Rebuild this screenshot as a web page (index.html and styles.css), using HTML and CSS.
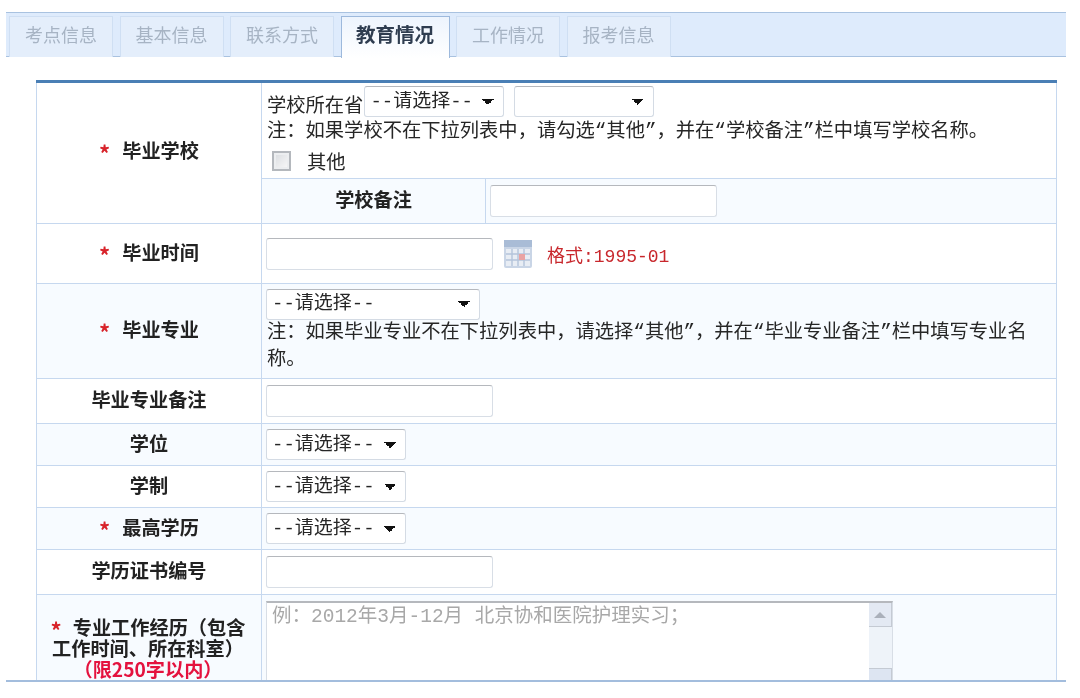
FILE: index.html
```html
<!DOCTYPE html>
<html lang="zh-CN">
<head>
<meta charset="utf-8">
<title>教育情况</title>
<link rel="stylesheet" href="styles.css">
</head>
<body>
<div class="page">
  <nav class="tabs">
    <a class="tab">考点信息</a>
    <a class="tab">基本信息</a>
    <a class="tab">联系方式</a>
    <a class="tab active">教育情况</a>
    <a class="tab">工作情况</a>
    <a class="tab">报考信息</a>
  </nav>
  <div class="panel">
    <table class="form">
      <colgroup><col class="c1"><col class="c2"><col class="c3"></colgroup>
      <tr class="r1">
        <th rowspan="2" class="first"><span class="star">*</span>毕业学校</th>
        <td colspan="2" class="school">
          <div class="line"><span class="prov">学校所在省</span><select class="sel s140"><option>--请选择--</option></select><select class="sel s140 next"><option></option></select></div>
          <div class="note">注&#xFF1A;如果学校不在下拉列表中&#xFF0C;请勾选“其他”&#xFF0C;并在“学校备注”栏中填写学校名称。</div>
          <label class="check"><span class="box"></span>其他</label>
        </td>
      </tr>
      <tr class="r2 tint">
        <th class="plain">学校备注</th>
        <td><input class="text" type="text"></td>
      </tr>
      <tr class="r3">
        <th><span class="star">*</span>毕业时间</th>
        <td colspan="2">
          <div class="line date"><input class="text" type="text">
            <svg class="cal" width="30" height="30" viewBox="0 0 30 30"><rect x="1" y="1" width="28" height="28" rx="2" fill="#c9d5e6"/><rect x="1" y="1" width="28" height="7" fill="#a9bcd6"/><rect x="3" y="10" width="24" height="17" fill="#e8edf4"/><path d="M3 15h24M3 21h24M9 10v17M15 10v17M21 10v17" stroke="#b4c4da" stroke-width="1.4"/><rect x="16" y="15" width="6" height="6" fill="#e9a3a3"/></svg>
            <span class="fmt">格式:1995-01</span></div>
        </td>
      </tr>
      <tr class="r4 tint">
        <th><span class="star">*</span>毕业专业</th>
        <td colspan="2" class="major">
          <select class="sel s214"><option>--请选择--</option></select>
          <div class="note">注&#xFF1A;如果毕业专业不在下拉列表中&#xFF0C;请选择“其他”&#xFF0C;并在“毕业专业备注”栏中填写专业名称。</div>
        </td>
      </tr>
      <tr class="r5">
        <th class="plain">毕业专业备注</th>
        <td colspan="2"><input class="text" type="text"></td>
      </tr>
      <tr class="r6 tint">
        <th class="plain">学位</th>
        <td colspan="2"><select class="sel s140"><option>--请选择--</option></select></td>
      </tr>
      <tr class="r6">
        <th class="plain">学制</th>
        <td colspan="2"><select class="sel s140"><option>--请选择--</option></select></td>
      </tr>
      <tr class="r6 tint">
        <th><span class="star">*</span>最高学历</th>
        <td colspan="2"><select class="sel s140"><option>--请选择--</option></select></td>
      </tr>
      <tr class="r5">
        <th class="plain">学历证书编号</th>
        <td colspan="2"><input class="text" type="text"></td>
      </tr>
      <tr class="r10 tint">
        <th class="long"><span class="star small">*</span>专业工作经历&#xFF08;包含<br>工作时间、所在科室&#xFF09;<br><span class="limit">&#xFF08;限250字以内&#xFF09;</span></th>
        <td colspan="2">
          <div class="areabox">
            <textarea class="area">例&#xFF1A;2012年3月-12月 北京协和医院护理实习&#xFF1B;</textarea>
            <div class="bar"><span class="btn up"></span><span class="btn down"></span></div>
          </div>
        </td>
      </tr>
    </table>
  </div>
</div>
</body>
</html>
```
FILE: styles.css
```css
* { box-sizing: border-box; }
html, body { margin: 0; padding: 0; background: #fff; }
body { height: 698px; overflow: hidden; }
.page {
  padding: 12px 14px 0 6px;
  font-family: "Liberation Mono", "Noto Sans CJK SC", monospace;
  font-size: 19.3px;
  color: #262626;
  filter: blur(0.45px);
}
.tabs {
  display: flex;
  gap: 6.5px;
  height: 45px;
  padding: 3px 0 0 3px;
  background: #deebfc;
  border-top: 1px solid #a9c2e0;
  border-bottom: 1px solid #a9c2e0;
}
.tab {
  width: 104px;
  height: 41px;
  text-align: center;
  line-height: 34px;
  font-size: 18px;
  font-family: "Noto Sans CJK SC", sans-serif;
  color: #a7b4c4;
  background: #e4eefb;
  border: 1px solid #cfdff3;
  border-bottom: 0;
}
.tab.active {
  width: 109px;
  height: 42px;
  font-size: 19.5px;
  color: #2f3d50;
  font-weight: 700;
  background: linear-gradient(#edf4fd, #fff);
  border-color: #9db9dc;
}
.panel {
  height: 625px;
  padding: 23px 9px 0 30px;
  overflow: hidden;
  border-bottom: 2px solid #a3bddd;
}
.form {
  width: 1021px;
  table-layout: fixed;
  border-collapse: collapse;
  border-top: 3px solid #4a7fb5;
}
.c1 { width: 225px; }
.c2 { width: 224px; }
.form th, .form td {
  border: 1px solid #c6d8ef;
  padding: 0 4px;
}
.form tr:first-child th, .form tr:first-child td { border-top: 0; }
.form th {
  font-family: "Noto Sans CJK SC", sans-serif;
  font-size: 19.2px;
  font-weight: 700;
  color: #222;
  text-align: center;
  padding-bottom: 4px;
}
.form th.first { padding-bottom: 6px; }
.tint th, .tint td { background: #f7fbff; }
.r1 td { height: 97px; }
.r2 th, .r2 td { height: 45px; }
.r3 th, .r3 td { height: 60px; }
.r4 th, .r4 td { height: 95px; }
.r5 th, .r5 td { height: 45px; }
.r6 th, .r6 td { height: 42px; }
.r10 th, .r10 td { height: 125px; vertical-align: top; }
.star {
  color: #d8232a;
  margin-right: 12px;
  font-size: 22px;
  line-height: 0;
  font-weight: 700;
  vertical-align: -4px;
}
.star.small { margin-right: 11px; }
.school { padding-top: 2px !important; vertical-align: top; }
.line { display: flex; align-items: center; }
.prov { margin: 5px 1px 0 1px; }
.note { line-height: 27px; padding-left: 1px; padding-right: 24px; }
.school .note { margin-top: 1px; }
.next { margin-left: 10px; }
.sel {
  appearance: none;
  -webkit-appearance: none;
  height: 31px;
  padding: 0 0 0 5px;
  font: inherit;
  font-size: 19px;
  color: #262626;
  border: 1px solid #d4dbe4;
  border-top-color: #b5b8bd;
  border-radius: 3px;
  background-color: #fff;
  background-image: linear-gradient(45deg, transparent 50%, #111 50%), linear-gradient(135deg, #111 50%, transparent 50%);
  background-size: 6px 6px, 6px 6px;
  background-position: right 15px center, right 9px center;
  background-repeat: no-repeat;
}
.s140 { width: 140px; }
.s214 { width: 214px; display: block; }
.text {
  width: 227px;
  height: 32px;
  display: block;
  background: #fff;
  border: 1px solid #d8dee6;
  border-top-color: #b5b8bd;
  border-radius: 3px;
}
.check { display: flex; align-items: center; height: 30px; padding-left: 6px; }
.box {
  width: 19px;
  height: 20px;
  margin-right: 16px;
  border: 2px solid #b4b8bd;
  background: linear-gradient(135deg, #d8dbdf, #fafafa);
  box-shadow: inset 0 0 0 2px #eceef0;
}
.cal { margin-left: 10px; }
.fmt { margin-left: 14px; color: #c8272c; font-size: 18px; }
.limit { color: #e4123e; }
.form .long { line-height: 21px; padding: 22px 4px 0 2px; }
.areabox {
  display: flex;
  width: 627px;
  height: 92px;
  margin-top: 6px;
  border: 1px solid #d8dee6;
  border-top: 2px solid #b5b8bd;
  background: #fff;
}
.area {
  flex: 1;
  min-width: 0;
  height: 100%;
  padding: 2px 5px;
  resize: none;
  overflow: hidden;
  font-family: "Liberation Mono", "Noto Sans CJK SC", monospace;
  font-size: 19.5px;
  line-height: 24px;
  color: #a8a8a8;
  background: #fff;
  border: 0;
  outline: 0;
}
.bar {
  width: 23px;
  display: flex;
  flex-direction: column;
  justify-content: space-between;
  background: #eef3f9;
}
.btn {
  display: flex;
  align-items: center;
  justify-content: center;
  height: 24px;
  background: #e3e9f3;
  border-right: 1px solid #c4cad3;
  border-bottom: 1px solid #c4cad3;
}
.btn.down { background: #dde5f2; border-top: 1px solid #c4cad3; }
.btn.up::before {
  content: "";
  border-left: 6px solid transparent;
  border-right: 6px solid transparent;
  border-bottom: 6px solid #aab0ba;
}
```
